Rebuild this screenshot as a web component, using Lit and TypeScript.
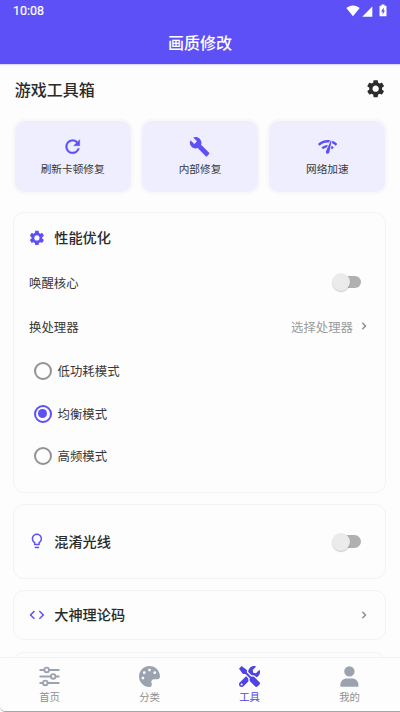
import { LitElement, html, css, svg } from "lit";
import { customElement, property, state } from "lit/decorators.js";
import { classMap } from "lit/directives/class-map.js";

const gear = "M19.14 12.94c.04-.3.06-.61.06-.94 0-.32-.02-.64-.07-.94l2.03-1.58c.18-.14.23-.41.12-.61l-1.92-3.32c-.12-.22-.37-.29-.59-.22l-2.39.96c-.5-.38-1.03-.7-1.62-.94l-.36-2.54c-.04-.24-.24-.41-.48-.41h-3.84c-.24 0-.43.17-.47.41l-.36 2.54c-.59.24-1.13.57-1.62.94l-2.39-.96c-.22-.08-.47 0-.59.22L2.74 8.87c-.12.21-.08.47.12.61l2.03 1.58c-.05.3-.09.63-.09.94s.02.64.07.94l-2.03 1.58c-.18.14-.23.41-.12.61l1.92 3.32c.12.22.37.29.59.22l2.39-.96c.5.38 1.03.7 1.62.94l.36 2.54c.05.24.24.41.48.41h3.84c.24 0 .44-.17.47-.41l.36-2.54c.59-.24 1.13-.56 1.62-.94l2.39.96c.22.08.47 0 .59-.22l1.92-3.32c.12-.22.07-.47-.12-.61l-2.01-1.58zM12 15.6c-1.98 0-3.6-1.62-3.6-3.6s1.62-3.6 3.6-3.6 3.6 1.62 3.6 3.6-1.62 3.6-3.6 3.6z";

const icons: Record<string, { box: string; body: unknown }> = {
  gear: { box: "0 0 24 24", body: svg`<path d=${gear} />` },
  refresh: {
    box: "0 0 24 24",
    body: svg`<path stroke="currentColor" stroke-width=".4" d="M17.65 6.35C16.2 4.9 14.21 4 12 4c-4.42 0-7.99 3.58-7.99 8s3.57 8 7.99 8c3.73 0 6.84-2.55 7.73-6h-2.08c-.82 2.33-3.04 4-5.65 4-3.31 0-6-2.69-6-6s2.69-6 6-6c1.66 0 3.14.69 4.22 1.78L13 11h7V4l-2.35 2.35z" />`,
  },
  wrench: {
    box: "0 0 24 24",
    body: svg`<path d="M22.7 19l-9.1-9.1c.9-2.3.4-5-1.5-6.9-2-2-5-2.4-7.4-1.3L9 6 6 9 1.6 4.7C.4 7.1.9 10.1 2.9 12.1c1.9 1.9 4.6 2.4 6.9 1.5l9.1 9.1c.4.4 1 .4 1.4 0l2.3-2.3c.5-.4.5-1.1.1-1.4z" />`,
  },
  network: {
    box: "0 0 24 24",
    body: svg`<path d="M15.9 5c-.17 0-.32.09-.41.23l-.07.15-5.18 11.65c-.16.29-.26.61-.26.96 0 1.11.9 2.01 2.01 2.01.96 0 1.77-.68 1.96-1.59l.01-.03L16.4 5.5c0-.28-.22-.5-.5-.5zM1 9l2 2c2.88-2.88 6.79-4.08 10.53-3.62l1.19-2.68C9.89 3.84 4.74 5.27 1 9zm20 2l2-2c-1.64-1.64-3.55-2.82-5.59-3.57l-.53 2.82c1.5.62 2.9 1.53 4.12 2.75zm-4 4l2-2c-.8-.8-1.7-1.42-2.66-1.89l-.55 2.92c.42.27.83.59 1.21.97zM5 13l2 2c1.13-1.13 2.56-1.79 4.03-2l1.28-2.88c-2.63-.08-5.3.87-7.31 2.88z" />`,
  },
  bulb: {
    box: "0 0 24 24",
    body: svg`<path d="M9 21c0 .55.45 1 1 1h4c.55 0 1-.45 1-1v-1H9v1zm3-19C8.14 2 5 5.14 5 9c0 2.38 1.19 4.47 3 5.74V17c0 .55.45 1 1 1h6c.55 0 1-.45 1-1v-2.26c1.81-1.27 3-3.36 3-5.74 0-3.86-3.14-7-7-7zm2.85 11.1l-.85.6V16h-4v-2.3l-.85-.6C7.8 12.16 7 10.63 7 9c0-2.76 2.24-5 5-5s5 2.24 5 5c0 1.63-.8 3.16-2.15 4.1z" />`,
  },
  code: {
    box: "0 0 24 24",
    body: svg`<path d="M9.4 16.6L4.8 12l4.6-4.6L8 6l-6 6 6 6 1.4-1.4zm5.2 0l4.6-4.6-4.6-4.6L16 6l6 6-6 6-1.4-1.4z" />`,
  },
  chevron: {
    box: "0 0 24 24",
    body: svg`<path stroke="currentColor" stroke-width=".5" d="M10 6L8.59 7.41 13.17 12l-4.58 4.59L10 18l6-6z" />`,
  },
  sliders: {
    box: "0 0 21 21",
    body: svg`<g fill="none" stroke="currentColor" stroke-width="2" stroke-linecap="round"><path d="M1.3 3.9h3.8M10.2 3.9h9.5M1.3 10.4h10.3M16.7 10.4h3M1.3 16.9h2.5M8.9 16.9h10.8" /><g stroke-width="1.9"><circle cx="7.7" cy="3.9" r="2.3" /><circle cx="14.2" cy="10.4" r="2.3" /><circle cx="6.3" cy="16.9" r="2.3" /></g></g>`,
  },
  palette: {
    box: "0 0 512 512",
    body: svg`<path fill-rule="evenodd" d="M204.3 5C104.9 24.4 24.8 104.3 5.2 203.4c-37 187 131.7 326.4 258.8 306.7 41.2-6.4 61.4-54.6 42.5-91.7-23.1-45.4 9.9-98.4 60.9-98.4h79.7c35.8 0 64.8-29.6 64.9-65.3C511.5 97.1 368.1-26.9 204.3 5zM96 328a34 34 0 1 1 0-68 34 34 0 0 1 0 68zM128 196a34 34 0 1 1 0-68 34 34 0 0 1 0 68zM256 132a34 34 0 1 1 0-68 34 34 0 0 1 0 68zM384 196a34 34 0 1 1 0-68 34 34 0 0 1 0 68z" />`,
  },
  tools: {
    box: "0 0 512 512",
    body: svg`<path d="M501.1 395.7L384 278.6c-23.1-23.1-57.6-27.6-85.4-13.9L192 158.1V96L64 0 0 64l96 128h62.1l106.6 106.6c-13.6 27.8-9.2 62.3 13.9 85.4l117.1 117.1c14.6 14.6 38.2 14.6 52.7 0l52.7-52.7c14.5-14.6 14.5-38.2 0-52.7zM331.7 225c28.3 0 54.9 11 74.9 31l19.4 19.4c15.8-6.9 30.8-16.5 43.8-29.5 37.1-37.1 49.7-89.3 37.9-136.7-2.2-9-13.5-12.1-20.1-5.5l-74.4 74.4-67.9-11.3L334 98.9l74.4-74.4c6.6-6.6 3.4-17.9-5.7-20.2-47.4-11.7-99.6.9-136.6 37.9-28.5 28.5-41.9 66.1-41.2 103.6l82.1 82.1c8.1-1.9 16.5-2.9 24.7-2.9zm-103.9 82l-56.7-56.7L18.7 402.8c-25 25-25 65.5 0 90.5s65.5 25 90.5 0l123.6-123.6c-7.6-19.9-9.9-41.6-5-62.7zM64 472c-13.2 0-24-10.8-24-24 0-13.3 10.7-24 24-24s24 10.7 24 24c0 13.2-10.7 24-24 24z" />`,
  },
  user: {
    box: "0 0 21 21",
    body: svg`<circle cx="10.4" cy="5.4" r="5.2" /><path d="M1.4 20.8v-2.2c0-3.3 2.9-6 6.2-6h5.6c3.3 0 6.2 2.7 6.2 6v2.2z" />`,
  },
  wifi: {
    box: "0 0 14 12",
    body: svg`<path d="M0.3 3C4.2-.5 9.8-.5 13.7 3L7 11.3z" />`,
  },
  signal: { box: "0 0 11 11", body: svg`<path d="M.3 10.7L10.3.5v10.2z" />` },
  battery: {
    box: "0 0 8 13",
    body: svg`<path fill-rule="evenodd" d="M2.5.5h3v1.2H7q.5 0 .5.6v9.4q0 .6-.6.6H1.1q-.6 0-.6-.6V2.3q0-.6.6-.6h1.4zM4.7 3.6L2.1 7.6h1.5v3l2.4-4.1H4.7z" />`,
  },
};

@customElement("ui-icon")
class UiIcon extends LitElement {
  @property() name = "gear";
  static styles = css`
    :host { display: block; flex: none; }
    svg { display: block; width: 100%; height: 100%; fill: currentColor; }
  `;
  render() {
    const icon = icons[this.name];
    return html`<svg viewBox=${icon.box}>${icon.body}</svg>`;
  }
}

@customElement("ui-switch")
class UiSwitch extends LitElement {
  static styles = css`
    :host { display: flex; align-items: center; width: 30px; height: 20px; }
    .thumb { width: 18px; height: 18px; border-radius: 50%; background: #ebebeb; box-shadow: 0 1px 1px rgba(0, 0, 0, 0.2); z-index: 1; flex: none; }
    .track { width: 24px; height: 12.6px; border-radius: 7px; background: #b0b0b0; margin-left: -13px; flex: none; }
  `;
  render() {
    return html`<div class="thumb"></div><div class="track"></div>`;
  }
}

@customElement("app-root")
class AppRoot extends LitElement {
  @state() mode = "均衡模式";
  @state() tab = "工具";

  static styles = css`
    * { box-sizing: border-box; }
    :host {
      display: flex; flex-direction: column; width: 400px; height: 712px; overflow: hidden;
      background: #fdfdfd; color: #383838;
      font-family: Roboto, "Noto Sans CJK SC", sans-serif; font-size: 12.4px;
    }
    .header { flex: none; height: 64px; background: #5e50f7; color: #fff; box-shadow: 0 1px 1px rgba(94, 80, 247, 0.2); }
    .status { height: 22px; padding: 0 13px; display: flex; align-items: center; }
    .time { flex: 1; font-size: 12.4px; font-weight: 400; -webkit-text-stroke: .2px; line-height: 22px; }
    .wifi { width: 14px; height: 12px; margin: 0 2px 1px 0; }
    .signal { width: 11px; height: 11px; margin-right: 6px; }
    .battery { width: 8px; height: 13px; margin-bottom: 1px; }
    .title { height: 42px; line-height: 44px; text-align: center; font-size: 16px; font-weight: 500; }
    .content { flex: 1; min-height: 0; overflow: hidden; padding: 0 14px 0 13px; }
    .heading { display: flex; align-items: center; justify-content: space-between; height: 50px; padding: 0 0 0 1.7px; font-size: 16px; font-weight: 500; color: #2a2a2a; }
    .heading span { margin-top: -1px; }
    .heading ui-icon { width: 21.3px; height: 21.3px; color: #2c2c2c; }
    .quick { display: grid; grid-template-columns: repeat(3, 116px); justify-content: space-between; margin: 7px .7px 20px 1.7px; }
    .tile { height: 71px; border-radius: 10px; background: #efeefe; box-shadow: 0 0 0 2.5px #f8f8f9; display: flex; flex-direction: column; align-items: center; padding-top: 15px; font-size: 10.67px; line-height: 16px; gap: 5px; }
    .tile ui-icon { width: 21.3px; height: 21.3px; color: #5e50f7; }
    .card { border: 1px solid #f3f3f3; border-radius: 11px; padding: 0 14px; margin-bottom: 12px; width: 373px; }
    .perf { height: 281px; padding-top: 3px; margin-bottom: 11px; }
    .light { height: 75px; margin-bottom: 11px; display: flex; align-items: center; }
    .theory { height: 50px; display: flex; align-items: center; }
    .next { height: 60px; }
    .section { flex: 1; display: flex; align-items: center; gap: 8px; height: 44px; font-size: 14.2px; font-weight: 500; color: #2a2a2a; }
    .section span { margin-top: -2px; }
    .section ui-icon { width: 17.8px; height: 17.8px; color: #5e50f7; margin-left: .4px; margin-top: -1px; }
    .row { height: 44px; display: flex; align-items: center; justify-content: space-between; padding-left: 1px; }
    .row > span, .pick > span { margin-top: 1px; }
    ui-switch { margin-right: 9px; }
    .pick { display: flex; align-items: center; gap: 4px; color: #9b9b9b; }
    .chev { width: 14px; height: 14px; color: #858585; }
    .options { padding-top: 1.5px; }
    .option { height: 42.7px; display: flex; align-items: center; gap: 6px; padding-left: 5.6px; }
    .radio { width: 18px; height: 18px; border: 2px solid #929292; border-radius: 50%; display: grid; place-items: center; }
    .on .radio { border-color: #5e50f7; }
    .on .radio::after { content: ""; width: 9px; height: 9px; border-radius: 50%; background: #5e50f7; }
    .nav { flex: none; position: relative; height: 55px; border-top: 1px solid #f2f2f2; border-bottom: 1px solid #a8a8a8; border-bottom-left-radius: 5px; background: #fdfdfd; display: grid; grid-template-columns: repeat(4, 1fr); }
    .tab { display: flex; flex-direction: column; align-items: center; padding-top: 8px; gap: 3px; font-size: 10.4px; line-height: 16px; color: #8f8f8f; }
    .tab span, .tab ui-icon { margin-right: .8px; }
    .tab ui-icon { width: 21px; height: 21px; color: #9ca3b0; }
    .active, .active ui-icon { color: #5043e4; }
  `;

  render() {
    const tiles = [["refresh", "刷新卡顿修复"], ["wrench", "内部修复"], ["network", "网络加速"]];
    const tabs = [["sliders", "首页"], ["palette", "分类"], ["tools", "工具"], ["user", "我的"]];
    return html`
      <div class="header">
        <div class="status">
          <div class="time">10:08</div>
          <ui-icon class="wifi" name="wifi"></ui-icon>
          <ui-icon class="signal" name="signal"></ui-icon>
          <ui-icon class="battery" name="battery"></ui-icon>
        </div>
        <div class="title">画质修改</div>
      </div>
      <div class="content">
        <div class="heading"><span>游戏工具箱</span><ui-icon name="gear"></ui-icon></div>
        <div class="quick">
          ${tiles.map(([icon, label]) => html`<div class="tile"><ui-icon name=${icon}></ui-icon><span>${label}</span></div>`)}
        </div>
        <div class="card perf">
          <div class="section"><ui-icon name="gear"></ui-icon><span>性能优化</span></div>
          <div class="row"><span>唤醒核心</span><ui-switch></ui-switch></div>
          <div class="row"><span>换处理器</span><div class="pick"><span>选择处理器</span><ui-icon class="chev" name="chevron"></ui-icon></div></div>
          <div class="options">
            ${["低功耗模式", "均衡模式", "高频模式"].map(
              (m) => html`<div class=${classMap({ option: true, on: m === this.mode })} @click=${() => (this.mode = m)}><div class="radio"></div><span>${m}</span></div>`
            )}
          </div>
        </div>
        <div class="card light"><div class="section"><ui-icon name="bulb"></ui-icon><span>混淆光线</span></div><ui-switch></ui-switch></div>
        <div class="card theory"><div class="section"><ui-icon name="code"></ui-icon><span>大神理论码</span></div><ui-icon class="chev" name="chevron"></ui-icon></div>
        <div class="card next"></div>
      </div>
      <div class="nav">
        ${tabs.map(
          ([icon, label]) => html`<div class=${classMap({ tab: true, active: label === this.tab })} @click=${() => (this.tab = label)}><ui-icon name=${icon}></ui-icon><span>${label}</span></div>`
        )}
      </div>
    `;
  }
}
